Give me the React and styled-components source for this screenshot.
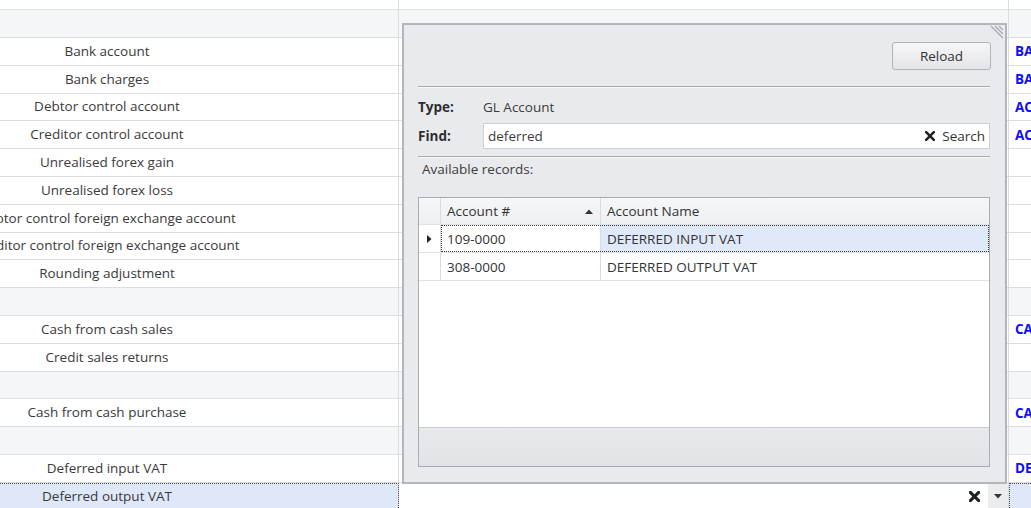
import React from 'react';
import styled, { createGlobalStyle, css } from 'styled-components';

const GlobalStyle = createGlobalStyle`
  html, body {
    margin: 0;
    padding: 0;
    background: #ffffff;
    overflow: hidden;
  }
  body {
    font-family: 'Open Sans', 'Noto Sans', 'Liberation Sans', sans-serif;
    font-size: 13.5px;
    color: #3c3c3c;
  }
`;

const Screen = styled.div`
  position: relative;
  width: 1031px;
  height: 508px;
  overflow: hidden;
`;

/* ---------- mapping sheet behind the popup ---------- */

const Sheet = styled.div`
  margin-left: -184px;
  width: 1393px;
  display: flex;
  flex-direction: column;
`;

const rowHeight = (p) => (p.$strip ? '9px' : p.$head ? '27px' : '26.8px');

const Row = styled.div`
  display: grid;
  grid-template-columns: 583px 610px 200px;
  height: ${rowHeight};
  border-bottom: 1px solid #dcdde2;
  background: ${(p) => (p.$band ? '#f5f6f8' : '#ffffff')};
`;

const Cell = styled.div`
  display: flex;
  align-items: center;
  border-right: 1px solid #dcdde2;
  overflow: hidden;
  white-space: nowrap;
  ${(p) =>
    p.$selected &&
    css`
      background: #dfe8f8;
      outline: 1px dotted #4a4a4a;
      outline-offset: -1px;
    `}
`;

const LabelCell = styled(Cell)`
  justify-content: center;
  color: #3a3a3a;
  padding-bottom: 1px;
`;

const CodeCell = styled(Cell)`
  padding-left: 6px;
  font-weight: 700;
  color: #1010f4;
  border-right: none;
`;

const EditorCell = styled(Cell)`
  justify-content: flex-end;
  background: #ffffff;
`;

const ClearGlyph = styled.span`
  display: flex;
  align-items: center;
  margin-right: 8px;
`;

const DropButton = styled.div`
  width: 20px;
  align-self: stretch;
  display: flex;
  align-items: center;
  justify-content: center;
  background: #ebecee;
`;

const CrossIcon = ({ size = 10, weight = 2.6, color = '#222' }) => (
  <svg width={size} height={size} viewBox="0 0 10 10">
    <path d="M1.2 1.2 L8.8 8.8 M8.8 1.2 L1.2 8.8" stroke={color} strokeWidth={weight} strokeLinecap="square" />
  </svg>
);

/* ---------- lookup popup ---------- */

const Popup = styled.div`
  position: absolute;
  left: 402px;
  top: 23px;
  width: 605px;
  height: 461px;
  box-sizing: border-box;
  background: #e9eaee;
  border: 2px solid #b3b5bc;
  padding: 17px 15px 0 14px;
  display: flex;
  flex-direction: column;
`;

const Grip = styled.svg`
  position: absolute;
  right: 2px;
  top: 1px;
`;

const TopBar = styled.div`
  display: flex;
  justify-content: flex-end;
  margin-right: -1px;
`;

const Button = styled.button`
  width: 99px;
  height: 28px;
  border: 1px solid #b1b3b9;
  border-radius: 3px;
  background: linear-gradient(#f6f6f8, #e4e5e8);
  font: inherit;
  color: #333;
  padding: 0;
`;

const Separator = styled.div`
  height: 1px;
  background: #a7a9af;
  border-bottom: 1px solid #f7f7f9;
  margin-top: ${(p) => p.$gap}px;
`;

const Field = styled.div`
  display: flex;
  align-items: center;
  height: ${(p) => p.$h}px;
  margin-top: ${(p) => p.$gap || 0}px;
`;

const FieldLabel = styled.div`
  width: 65px;
  font-weight: 700;
  color: #2e2e2e;
`;

const SearchBox = styled.div`
  flex: 1;
  height: 26px;
  box-sizing: border-box;
  background: #fff;
  border: 1px solid #cfd1d6;
  display: flex;
  align-items: center;
  padding: 0 4px;
`;

const SearchText = styled.span`
  flex: 1;
`;

const SearchAction = styled.span`
  display: flex;
  align-items: center;
  gap: 7px;
  color: #333;
`;

const Caption = styled.div`
  margin-left: 4px;
  height: 22px;
  display: flex;
  align-items: center;
`;

const Table = styled.div`
  margin-top: 17px;
  height: 270px;
  box-sizing: border-box;
  border: 1px solid #a9abb2;
  background: #fff;
  display: flex;
  flex-direction: column;
`;

const TableRow = styled.div`
  display: flex;
  height: ${(p) => (p.$head ? 26 : 27)}px;
  border-bottom: 1px solid #e1e2e5;
  background: ${(p) => (p.$head ? 'linear-gradient(#f7f7f9, #eeeff2)' : '#fff')};
`;

const Indicator = styled.div`
  width: 21px;
  border-right: 1px solid #dadbe0;
  display: flex;
  align-items: center;
  justify-content: center;
`;

const Cells = styled.div`
  flex: 1;
  display: flex;
  ${(p) =>
    p.$focused &&
    css`
      outline: 1px dotted #3a3a3a;
      outline-offset: -1px;
    `}
`;

const TableCell = styled.div`
  width: ${(p) => (p.$w ? `${p.$w}px` : 'auto')};
  flex: ${(p) => (p.$w ? 'none' : 1)};
  box-sizing: border-box;
  display: flex;
  align-items: center;
  padding: 0 6px;
  border-right: ${(p) => (p.$last ? 'none' : '1px solid #dadbe0')};
  background: ${(p) => (p.$hl ? '#e0e9f9' : 'transparent')};
  color: #333;
`;

const SortMark = styled.span`
  margin-left: auto;
  margin-right: 1px;
  display: flex;
`;

const Filler = styled.div`
  flex: 1;
`;

const Footer = styled.div`
  height: 38px;
  border-top: 1px solid #c9cbd0;
  background: linear-gradient(#e8e9ec, #e2e3e7);
`;

const mappings = [
  { band: true },
  { label: 'Bank account', code: 'BANK' },
  { label: 'Bank charges', code: 'BANK CHARGES' },
  { label: 'Debtor control account', code: 'ACCOUNTS RECEIVABLE' },
  { label: 'Creditor control account', code: 'ACCOUNTS PAYABLE' },
  { label: 'Unrealised forex gain' },
  { label: 'Unrealised forex loss' },
  { label: 'Debtor control foreign exchange account' },
  { label: 'Creditor control foreign exchange account' },
  { label: 'Rounding adjustment' },
  { band: true },
  { label: 'Cash from cash sales', code: 'CASH' },
  { label: 'Credit sales returns' },
  { band: true },
  { label: 'Cash from cash purchase', code: 'CASH' },
  { band: true },
  { label: 'Deferred input VAT', code: 'DEFERRED INPUT VAT' },
  { label: 'Deferred output VAT', selected: true },
];

const records = [
  { no: '109-0000', name: 'DEFERRED INPUT VAT' },
  { no: '308-0000', name: 'DEFERRED OUTPUT VAT' },
];

const App = () => (
  <Screen>
    <GlobalStyle />
    <Sheet>
      <Row $strip>
        <Cell />
        <Cell />
        <Cell />
      </Row>
      {mappings.map((m, i) =>
        m.band ? (
          <Row key={i} $band $head={i === 0}>
            <Cell />
            <Cell />
            <Cell />
          </Row>
        ) : (
          <Row key={i}>
            <LabelCell $selected={m.selected}>{m.label}</LabelCell>
            {m.selected ? (
              <EditorCell>
                <ClearGlyph>
                  <CrossIcon size={11} weight={2.8} />
                </ClearGlyph>
                <DropButton>
                  <svg width="8" height="5" viewBox="0 0 8 5">
                    <path d="M0 0 H8 L4 4.5 Z" fill="#333" />
                  </svg>
                </DropButton>
              </EditorCell>
            ) : (
              <Cell />
            )}
            <CodeCell $selected={m.selected}>{m.code}</CodeCell>
          </Row>
        )
      )}
    </Sheet>

    <Popup>
      <Grip width="14" height="14" viewBox="0 0 14 14">
        <path d="M2 0 L14 12 M6 0 L14 8 M10 0 L14 4" stroke="#a3a5ab" strokeWidth="1.2" />
      </Grip>
      <TopBar>
        <Button>Reload</Button>
      </TopBar>
      <Separator $gap={16} />
      <Field $h={22} $gap={8}>
        <FieldLabel>Type:</FieldLabel>
        <span>GL Account</span>
      </Field>
      <Field $h={36}>
        <FieldLabel>Find:</FieldLabel>
        <SearchBox>
          <SearchText>deferred</SearchText>
          <SearchAction>
            <CrossIcon size={10} weight={2.6} />
            Search
          </SearchAction>
        </SearchBox>
      </Field>
      <Separator $gap={2} />
      <Caption>Available records:</Caption>
      <Table>
        <TableRow $head>
          <Indicator />
          <Cells>
            <TableCell $w={160}>
              Account #
              <SortMark>
                <svg width="8" height="5" viewBox="0 0 8 5">
                  <path d="M0 5 H8 L4 0.5 Z" fill="#333" />
                </svg>
              </SortMark>
            </TableCell>
            <TableCell $last>Account Name</TableCell>
          </Cells>
        </TableRow>
        {records.map((r, i) => (
          <TableRow key={r.no}>
            <Indicator>
              {i === 0 && (
                <svg width="5" height="8" viewBox="0 0 5 8">
                  <path d="M0 0 V8 L4.5 4 Z" fill="#222" />
                </svg>
              )}
            </Indicator>
            <Cells $focused={i === 0}>
              <TableCell $w={160}>{r.no}</TableCell>
              <TableCell $last $hl={i === 0}>
                {r.name}
              </TableCell>
            </Cells>
          </TableRow>
        ))}
        <Filler />
        <Footer />
      </Table>
    </Popup>
  </Screen>
);

export default App;
